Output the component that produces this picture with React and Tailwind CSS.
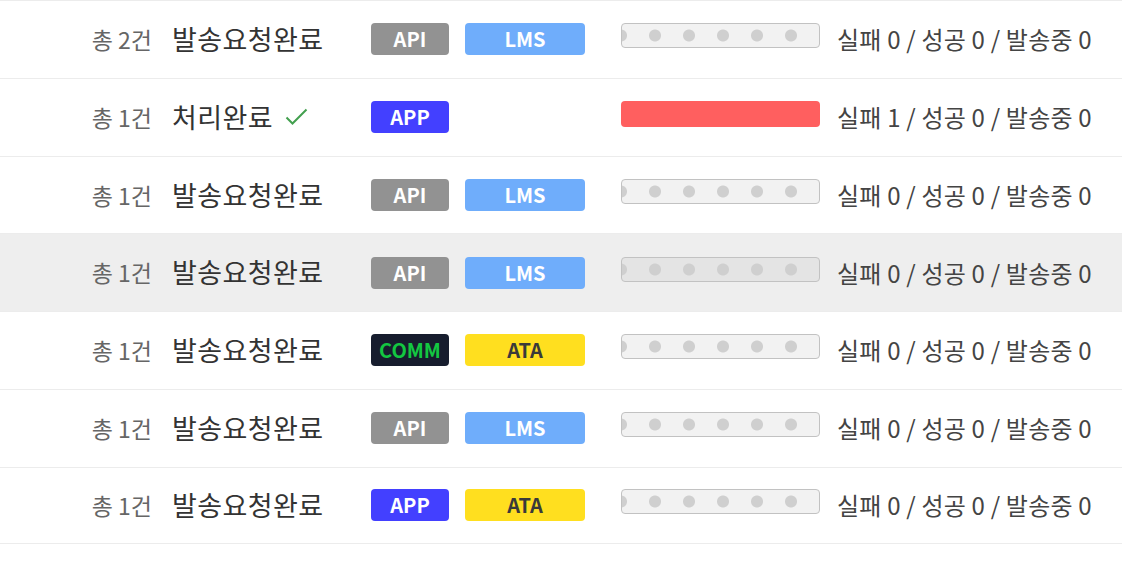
import React from "react";

const BADGES = {
  API: "bg-[#929292] text-white",
  LMS: "bg-[#6fadfb] text-white",
  APP: "bg-[#4340ff] text-white",
  COMM: "bg-[#171d2e] text-[#13c741]",
  ATA: "bg-[#ffdf1f] text-[#3a3a3a]",
};

const rows = [
  { count: 2, title: "발송요청완료", a: "API", b: "LMS", fail: 0 },
  { count: 1, title: "처리완료", a: "APP", b: null, fail: 1, done: true },
  { count: 1, title: "발송요청완료", a: "API", b: "LMS", fail: 0 },
  { count: 1, title: "발송요청완료", a: "API", b: "LMS", fail: 0, hl: true },
  { count: 1, title: "발송요청완료", a: "COMM", b: "ATA", fail: 0 },
  { count: 1, title: "발송요청완료", a: "API", b: "LMS", fail: 0 },
  { count: 1, title: "발송요청완료", a: "APP", b: "ATA", fail: 0 },
];

function Badge({ name, wide }) {
  return (
    <div
      className={`${BADGES[name]} ${
        wide ? "w-[120px]" : "w-[78px]"
      } h-[32px] rounded-[4px] flex items-center justify-center text-[20px] font-bold leading-none`}
    >
      {name}
    </div>
  );
}

function Bar({ fail, hl }) {
  if (fail) {
    return <div className="w-[199px] h-[26px] mb-[7px] rounded-[4px] bg-[#ff5f5f]" />;
  }
  return (
    <div
      className={`w-[199px] h-[25px] mb-[7px] rounded-[4px] border-[1.5px] border-[#c2c2c2] ${
        hl ? "bg-[#e4e4e4]" : "bg-[#f2f2f2]"
      } bg-[radial-gradient(circle_at_17px_50%,#cfcfcf_5.5px,transparent_6.5px)] bg-[length:34px_100%] bg-[position:-18px_0]`}
    />
  );
}

export default function App() {
  return (
    <div
      className="w-[1122px] h-[564px] bg-white"
      style={{ fontFamily: '"Noto Sans CJK KR", "Noto Sans", sans-serif' }}
    >
      {rows.map((r, i) => (
        <div
          key={i}
          className={`flex items-center h-[77.75px] border-t-[1.5px] border-[#ececec] ${
            r.hl ? "bg-[#eeeeee]" : ""
          } ${i === rows.length - 1 ? "border-b-[1.5px]" : ""}`}
        >
          <div className="w-[152px] flex justify-end text-[23px] text-[#666666] whitespace-nowrap">
            총 {r.count}건
          </div>
          <div className="w-[219px] pl-[20px] flex items-center text-[27px] tracking-[0.4px] text-[#333333] whitespace-nowrap">
            <span>{r.title}</span>
            {r.done && (
              <svg
                className="ml-[12px]"
                width="23"
                height="18"
                viewBox="0 0 23 18"
                fill="none"
              >
                <polyline
                  points="1.5,9.5 7.5,15.5 21.5,1.5"
                  stroke="#43a04f"
                  strokeWidth="2"
                  fill="none"
                />
              </svg>
            )}
          </div>
          <div className="w-[250px] flex items-center gap-[16px]">
            <Badge name={r.a} />
            {r.b && <Badge name={r.b} wide />}
          </div>
          <Bar fail={r.fail} hl={r.hl} />
          <div className="ml-[17px] text-[24px] tracking-[0.2px] text-[#444444] whitespace-nowrap">
            실패 {r.fail} / 성공 0 / 발송중 0
          </div>
        </div>
      ))}
    </div>
  );
}
